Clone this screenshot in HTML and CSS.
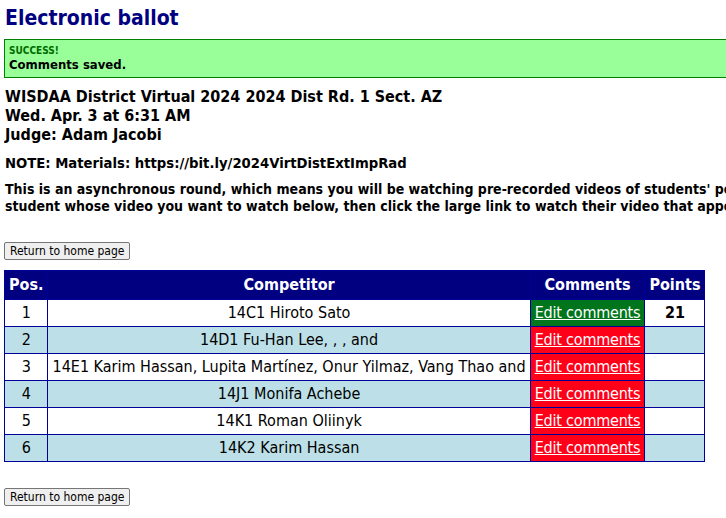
FILE: index.html
```html
<!DOCTYPE html>
<html lang="en">
<head>
    <meta charset="UTF-8">
    <meta name="viewport" content="width=device-width, initial-scale=1.0">
    <title>Electronic ballot</title>
    <link rel="stylesheet" href="styles.css">
</head>
<body>
    <h1>Electronic ballot</h1>

    <div class="alert">
        <div class="alert-title">SUCCESS!</div>
        <div class="alert-text">Comments saved.</div>
    </div>

    <div class="round-info">
        WISDAA District Virtual 2024 2024 Dist Rd. 1 Sect. AZ<br>
        Wed. Apr. 3 at 6:31 AM<br>
        Judge: Adam Jacobi
    </div>

    <p class="note">NOTE: Materials: https://bit.ly/2024VirtDistExtImpRad</p>

    <p class="instructions">
        This is an asynchronous round, which means you will be watching pre-recorded videos of students' performances. Click the name of the<br>
        student whose video you want to watch below, then click the large link to watch their video that appears at the top of the page.
    </p>

    <form class="home-form" action="#">
        <button type="button">Return to home page</button>
    </form>

    <!-- Ballot table -->
    <table class="ballot">
        <thead>
            <tr>
                <th>Pos.</th>
                <th>Competitor</th>
                <th>Comments</th>
                <th>Points</th>
            </tr>
        </thead>
        <tbody>
            <tr>
                <td>1</td>
                <td>14C1 Hiroto Sato</td>
                <td class="comments done"><a href="#">Edit comments</a></td>
                <td class="points">21</td>
            </tr>
            <tr>
                <td>2</td>
                <td>14D1 Fu-Han Lee, , , and</td>
                <td class="comments"><a href="#">Edit comments</a></td>
                <td class="points"></td>
            </tr>
            <tr>
                <td>3</td>
                <td>14E1 Karim Hassan, Lupita Martínez, Onur Yilmaz, Vang Thao and</td>
                <td class="comments"><a href="#">Edit comments</a></td>
                <td class="points"></td>
            </tr>
            <tr>
                <td>4</td>
                <td>14J1 Monifa Achebe</td>
                <td class="comments"><a href="#">Edit comments</a></td>
                <td class="points"></td>
            </tr>
            <tr>
                <td>5</td>
                <td>14K1 Roman Oliinyk</td>
                <td class="comments"><a href="#">Edit comments</a></td>
                <td class="points"></td>
            </tr>
            <tr>
                <td>6</td>
                <td>14K2 Karim Hassan</td>
                <td class="comments"><a href="#">Edit comments</a></td>
                <td class="points"></td>
            </tr>
        </tbody>
    </table>

    <form class="home-form bottom" action="#">
        <button type="button">Return to home page</button>
    </form>
</body>
</html>
```

FILE: styles.css
```css
html {
    overflow-x: hidden;
}
body {
    font-family: "DejaVu Sans Condensed", "DejaVu Sans", sans-serif;
    margin: 4px;
    min-width: 1100px;
    color: #000;
    background: #fff;
}
h1 {
    font-size: 21px;
    color: #000080;
    margin: 1px 0 7px 1px;
    line-height: 27px;
}
.alert {
    background-color: #99ff99;
    border: 1px solid #008000;
    padding: 4px;
    font-weight: bold;
}
.alert-title {
    font-size: 10px;
    color: #006b00;
    line-height: 13px;
}
.alert-text {
    font-size: 13px;
    line-height: 16px;
}
.round-info {
    font-size: 16px;
    font-weight: bold;
    line-height: 19px;
    margin: 9px 0 0 1px;
}
.note {
    font-size: 14.7px;
    font-weight: bold;
    line-height: 17px;
    margin: 10px 0 0 1px;
    white-space: nowrap;
}
.instructions {
    font-size: 14px;
    font-weight: bold;
    line-height: 17px;
    margin: 10px 0 0 1px;
    white-space: nowrap;
}
.home-form {
    margin: 25px 0 10px;
}
.home-form.bottom {
    margin-top: 24px;
}
button {
    font-family: inherit;
    font-size: 12px;
    line-height: 14px;
    padding: 1px 5px;
    border: 1px solid #767676;
    border-radius: 2px;
    background-color: #efefef;
    color: #000;
    cursor: pointer;
}
.ballot {
    border-collapse: collapse;
    border: 1px solid #000099;
    font-size: 16px;
}
.ballot th, .ballot td {
    border: 1px solid #000099;
    padding: 4px 4px;
    text-align: center;
    line-height: 18px;
}
.ballot th {
    background-color: #000080;
    color: #fff;
    font-weight: bold;
    padding: 5px 4px;
}
.ballot tbody tr:nth-child(even) td {
    background-color: #bde0e8;
}
.ballot tbody tr td.comments {
    background-color: #ff0019;
}
.ballot tbody tr td.comments.done {
    background-color: #00751b;
}
.ballot td.comments a {
    color: #fff;
    letter-spacing: -0.2px;
}
.ballot td.points {
    font-weight: bold;
}
```
